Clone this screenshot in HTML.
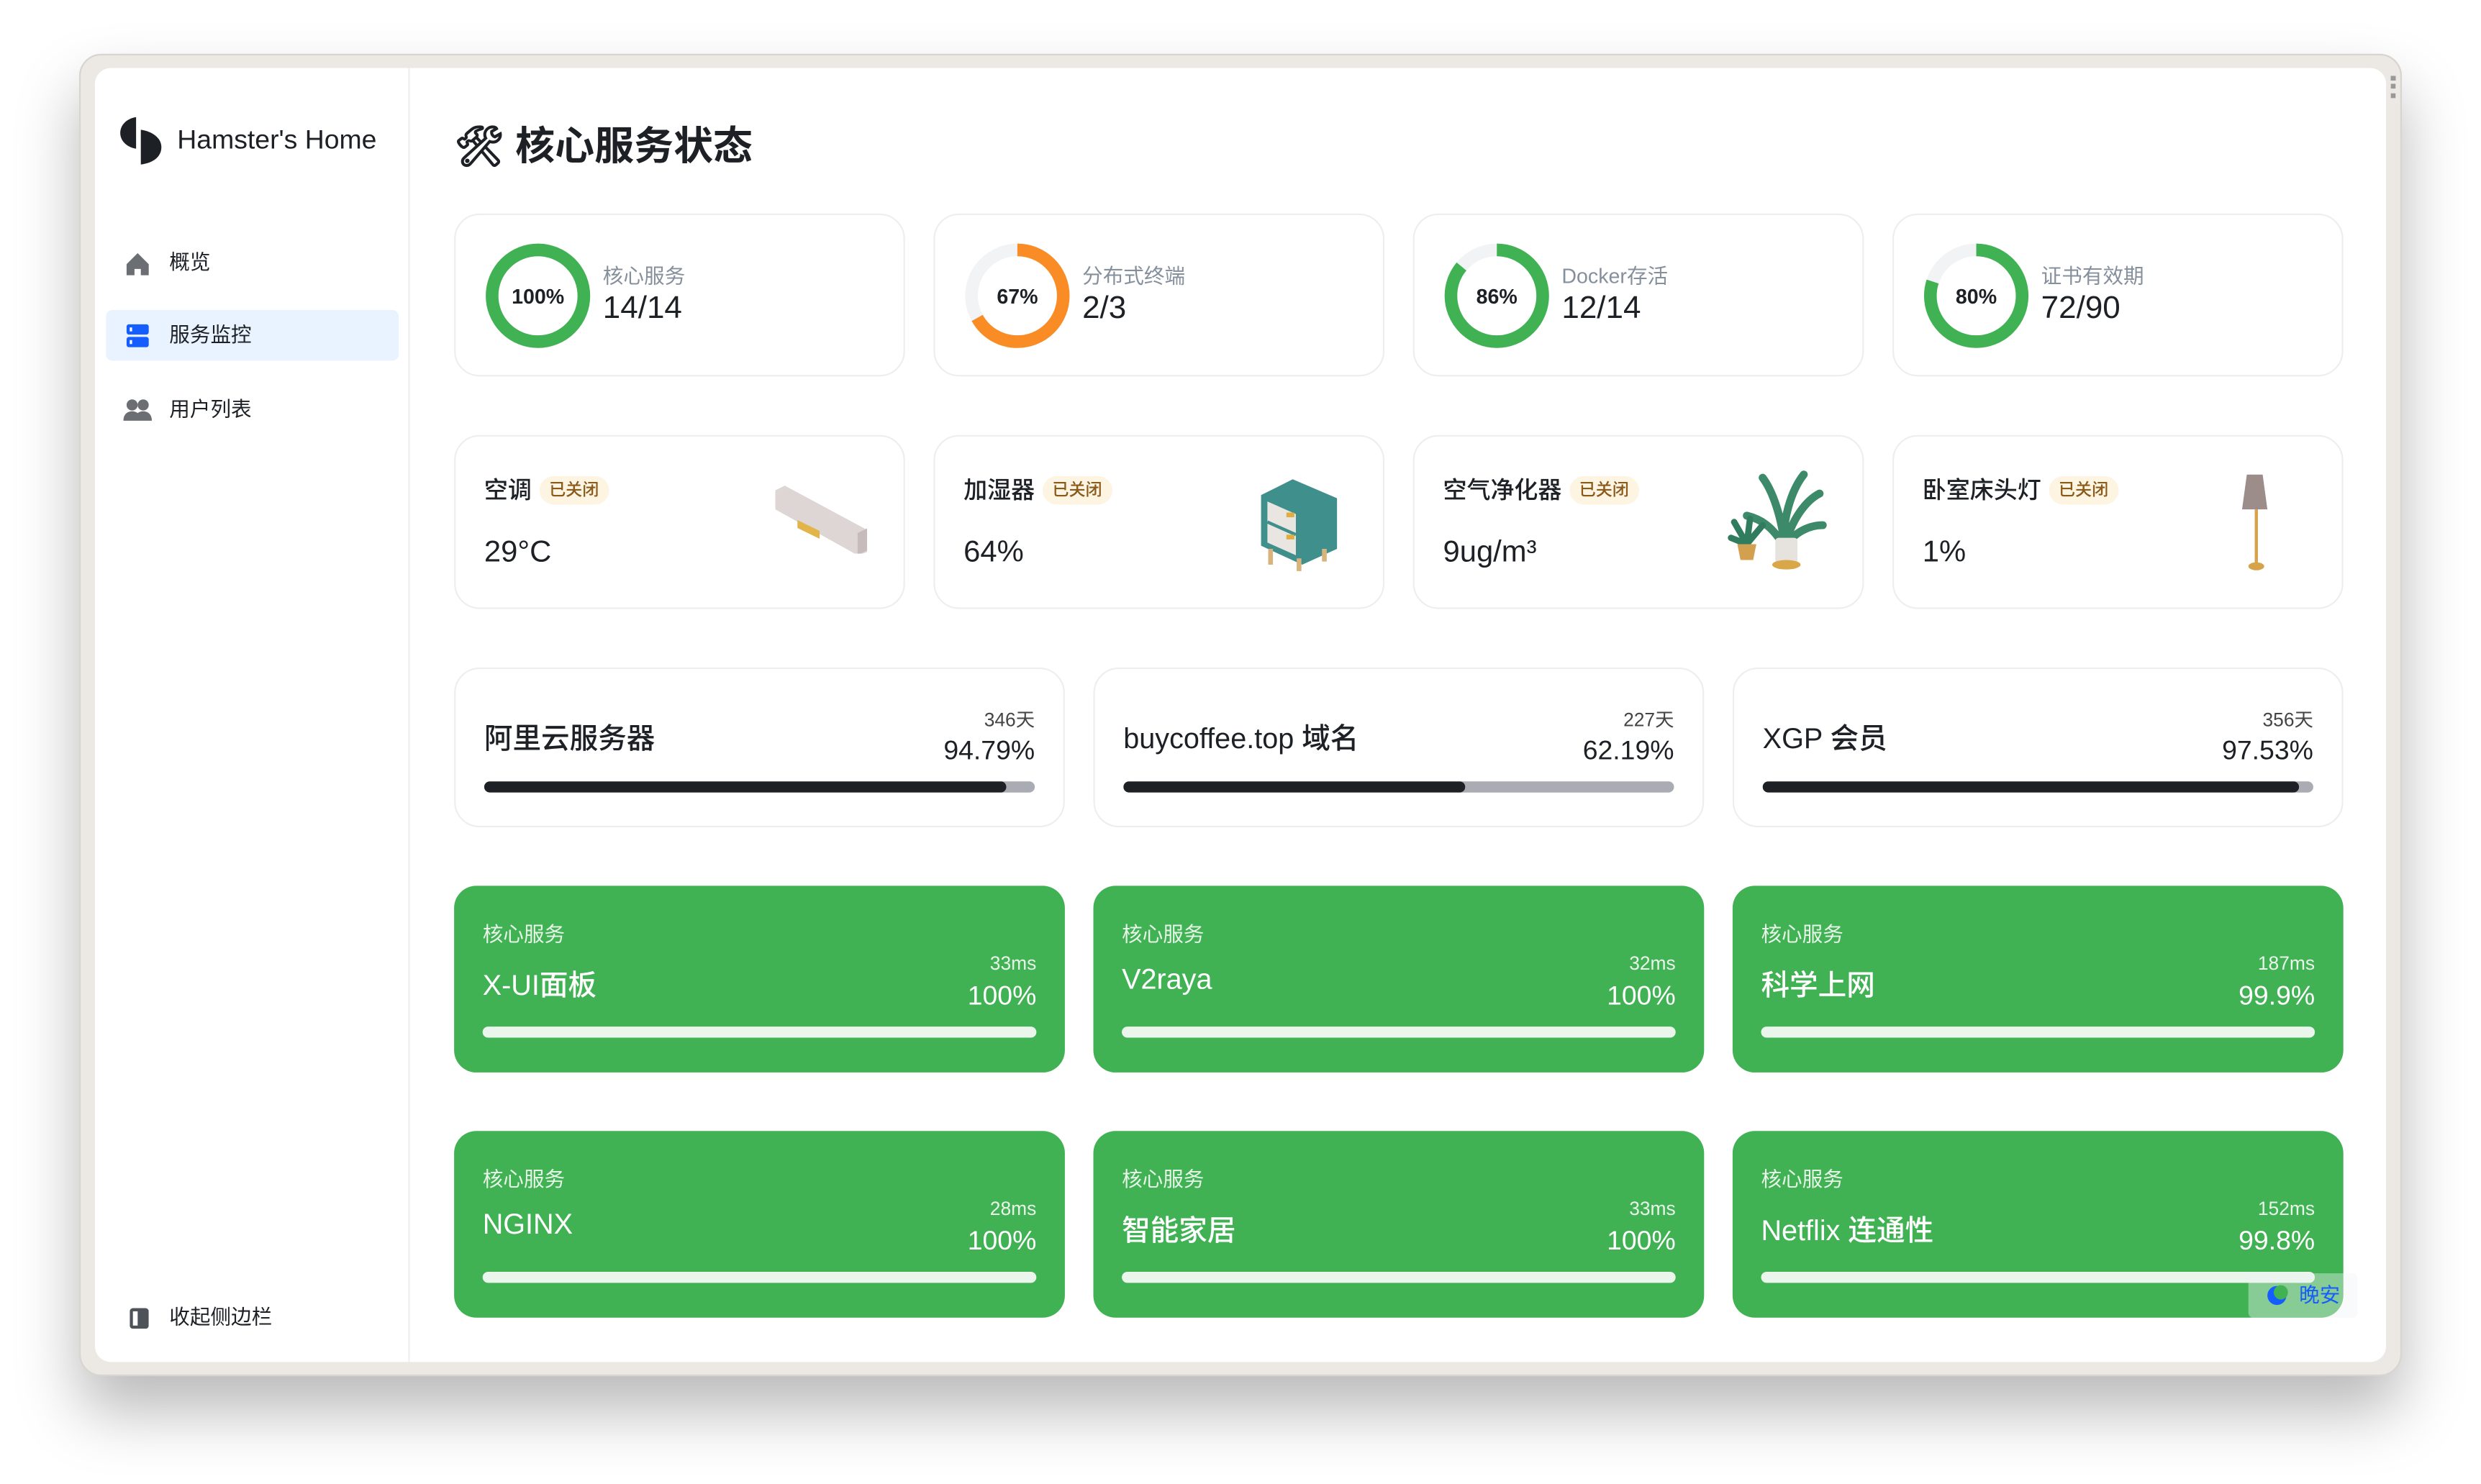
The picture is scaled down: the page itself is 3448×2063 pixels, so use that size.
<!DOCTYPE html>
<html><head><meta charset="utf-8"><style>
*{box-sizing:border-box;margin:0;padding:0}
html,body{width:3448px;height:2062px;overflow:hidden;background:#fff}
body{font-family:"Liberation Sans","Noto Sans CJK SC",sans-serif;color:#1d2025}
#s{position:absolute;left:0;top:0;width:1568px;height:938px;transform:scale(2.19898);transform-origin:0 0}
.a{position:absolute}
.frame{left:50px;top:34px;width:1468px;height:836px;background:#ece8e4;border-radius:14px;box-shadow:0 22px 40px rgba(0,0,0,.28);border:1px solid #d8d4d0}
.win{left:60px;top:43px;width:1448px;height:818px;background:#fff;border-radius:10px;overflow:hidden}
.side{left:0;top:0;width:199px;height:818px;border-right:1px solid #eee}
.nav{position:absolute;left:7px;width:185px;height:32px;border-radius:4px;font-size:13px;color:#1d2025;line-height:32px;padding-left:40px}
.card{position:absolute;background:#fff;border:1.5px solid #eee;border-radius:16px}
.lbl{font-size:13px;color:#86909c}
.val{font-size:20px;font-weight:500;color:#1d2025}
.badge{display:inline-block;background:#fdf4e2;color:#8a5a1a;font-size:10.5px;padding:0 6px;border-radius:9px;line-height:18px;vertical-align:2px;margin-left:5px}
.g{position:absolute;background:#41b254;border-radius:14px;color:#fff;width:386px;height:118px}
.g .t{position:absolute;left:18px;top:20px;font-size:13px;color:#e6f5e8}
.g .n{position:absolute;left:18px;top:49px;font-size:18px;font-weight:500}
.g .ms{position:absolute;right:18px;top:42px;font-size:12px;color:#e8f5ea}
.g .p{position:absolute;right:18px;top:60px;font-size:17px}
.g .b{position:absolute;left:18px;right:18px;top:89px;height:7px;border-radius:4px;background:#eaf6ec}
.w .n{position:absolute;left:18px;top:30px;font-size:18px;font-weight:500}
.w .d{position:absolute;right:18px;top:23px;font-size:12px;color:#444}
.w .p{position:absolute;right:18px;top:42px;font-size:17px}
.w .b{position:absolute;left:18px;right:18px;top:71px;height:7px;border-radius:4px;background:#a9adb3;overflow:hidden}
.w .b i{display:block;height:7px;background:#1d2025;border-radius:4px}
</style></head><body><div id="s">
<div class="a frame"></div>
<div class="a win">
 <div class="a side">
  <svg class="a" style="left:15px;top:31px" width="28" height="30" viewBox="0 0 28 30"><path d="M11 0v20C5 19 1 15 1 10S5 1 11 0z" fill="#1d2025"/><path d="M14 8c7 1 13 5 13 11s-5 10-13 11z" fill="#1d2025"/></svg>
  <div class="a" style="left:52px;top:36px;font-size:17px;font-weight:500">Hamster's Home</div>
  <div class="nav" style="top:107px"><svg class="a" style="left:12px;top:9px" width="16" height="16" viewBox="0 0 16 16"><path d="M8 1L1 8v7h5v-4h4v4h5V8z" fill="#6b6e73"/></svg>概览</div>
  <div class="nav" style="top:153px;background:#e8f3ff"><svg class="a" style="left:12px;top:9px" width="16" height="15" viewBox="0 0 16 15"><rect x="1" y="0" width="14" height="6.5" rx="1.5" fill="#165dff"/><rect x="1" y="8" width="14" height="6.5" rx="1.5" fill="#165dff"/><rect x="3" y="2" width="1.5" height="2.5" fill="#fff"/><rect x="3" y="10" width="1.5" height="2.5" fill="#fff"/></svg>服务监控</div>
  <div class="nav" style="top:200px"><svg class="a" style="left:11px;top:8px" width="18" height="16" viewBox="0 0 18 16"><circle cx="5.5" cy="5" r="3.5" fill="#6b6e73"/><circle cx="12.5" cy="5" r="3.5" fill="#6b6e73"/><path d="M0 15c0-4 2.5-6 5.5-6s5.5 2 5.5 6zM7 15c0-4 2.5-6 5.5-6S18 11 18 15z" fill="#6b6e73"/></svg>用户列表</div>
  <div class="nav" style="top:774px"><svg class="a" style="left:15px;top:10px" width="12" height="13" viewBox="0 0 12 13"><rect x="0" y="0" width="12" height="13" rx="2" fill="#4e5359"/><rect x="2" y="2" width="3" height="9" fill="#fff"/></svg>收起侧边栏</div>
 </div>
 <div class="a" style="left:227px;top:30px;font-size:25px;font-weight:700">🛠 核心服务状态</div>
</div>
<div class="a" style="left:1511px;top:48px;width:3px;height:14px;border-left:3px dotted #999"></div>

<div class="card" style="left:287px;top:135px;width:285px;height:103px">
 <svg class="a" style="left:18px;top:17px" width="68" height="68"><circle cx="34" cy="34" r="29" fill="none" stroke="#f2f3f5" stroke-width="8"/><circle cx="34" cy="34" r="29" fill="none" stroke="#41b254" stroke-width="8" stroke-dasharray="182.2 200" transform="rotate(-90 34 34)"/><text x="34" y="39" text-anchor="middle" font-size="13" font-weight="600" fill="#1d2025" font-family="Liberation Sans">100%</text></svg>
 <div class="a lbl" style="left:93px;top:28px">核心服务</div><div class="a val" style="left:93px;top:48px">14/14</div></div>
<div class="card" style="left:590px;top:135px;width:285px;height:103px">
 <svg class="a" style="left:18px;top:17px" width="68" height="68"><circle cx="34" cy="34" r="29" fill="none" stroke="#f2f3f5" stroke-width="8"/><circle cx="34" cy="34" r="29" fill="none" stroke="#fa8c25" stroke-width="8" stroke-dasharray="122 200" transform="rotate(-90 34 34)"/><text x="34" y="39" text-anchor="middle" font-size="13" font-weight="600" fill="#1d2025" font-family="Liberation Sans">67%</text></svg>
 <div class="a lbl" style="left:93px;top:28px">分布式终端</div><div class="a val" style="left:93px;top:48px">2/3</div></div>
<div class="card" style="left:893px;top:135px;width:285px;height:103px">
 <svg class="a" style="left:18px;top:17px" width="68" height="68"><circle cx="34" cy="34" r="29" fill="none" stroke="#f2f3f5" stroke-width="8"/><circle cx="34" cy="34" r="29" fill="none" stroke="#41b254" stroke-width="8" stroke-dasharray="156.7 200" transform="rotate(-90 34 34)"/><text x="34" y="39" text-anchor="middle" font-size="13" font-weight="600" fill="#1d2025" font-family="Liberation Sans">86%</text></svg>
 <div class="a lbl" style="left:93px;top:28px">Docker存活</div><div class="a val" style="left:93px;top:48px">12/14</div></div>
<div class="card" style="left:1196px;top:135px;width:285px;height:103px">
 <svg class="a" style="left:18px;top:17px" width="68" height="68"><circle cx="34" cy="34" r="29" fill="none" stroke="#f2f3f5" stroke-width="8"/><circle cx="34" cy="34" r="29" fill="none" stroke="#41b254" stroke-width="8" stroke-dasharray="145.8 200" transform="rotate(-90 34 34)"/><text x="34" y="39" text-anchor="middle" font-size="13" font-weight="600" fill="#1d2025" font-family="Liberation Sans">80%</text></svg>
 <div class="a lbl" style="left:93px;top:28px">证书有效期</div><div class="a val" style="left:93px;top:48px">72/90</div></div>

<div class="card" style="left:287px;top:275px;width:285px;height:110px">
 <div class="a" style="left:18px;top:23px;font-size:15px;font-weight:500">空调<span class="badge">已关闭</span></div>
 <div class="a" style="left:18px;top:63px;font-size:19px;font-weight:500">29°C</div>
 <svg class="a" style="left:198px;top:30px" width="64" height="44"><path d="M4 4l6-3 52 28v14l-6 2L4 16z" fill="#ddd6d4"/><path d="M56 31l6-3v14l-6 3z" fill="#c7bcbb"/><rect x="18" y="14" width="14" height="5" fill="#e3b44a" transform="skewY(26)"/></svg></div>
<div class="card" style="left:590px;top:275px;width:285px;height:110px">
 <div class="a" style="left:18px;top:23px;font-size:15px;font-weight:500">加湿器<span class="badge">已关闭</span></div>
 <div class="a" style="left:18px;top:63px;font-size:19px;font-weight:500">64%</div>
 <svg class="a" style="left:202px;top:25px" width="56" height="60"><path d="M4 12l20-10 28 12v32L30 56 4 44z" fill="#3f8f8c"/><path d="M8 16l18 8v26L8 42z" fill="#e9e6e2"/><path d="M8 29l18 8" stroke="#3f8f8c" stroke-width="2"/><rect x="20" y="23" width="5" height="3" fill="#e0ae40"/><rect x="20" y="37" width="5" height="3" fill="#e0ae40"/><path d="M10 46v10M28 52v10M44 46v8" stroke="#d8b37c" stroke-width="3"/></svg></div>
<div class="card" style="left:893px;top:275px;width:285px;height:110px">
 <div class="a" style="left:18px;top:23px;font-size:15px;font-weight:500">空气净化器<span class="badge">已关闭</span></div>
 <div class="a" style="left:18px;top:63px;font-size:19px;font-weight:500">9ug/m³</div>
 <svg class="a" style="left:196px;top:20px" width="66" height="66"><path d="M38 50C36 30 30 14 24 6M38 50c4-18 14-30 22-34M38 50C30 36 22 32 14 30M38 50c6-10 16-14 24-14M38 48c-2-14 4-34 12-44" stroke="#3d8a6a" stroke-width="5" fill="none" stroke-linecap="round"/><rect x="32" y="44" width="14" height="16" rx="2" fill="#e6e2de"/><ellipse cx="39" cy="61" rx="9" ry="3" fill="#d9a648"/><path d="M14 48L6 34M14 48l10-12M14 48L4 44M14 48l2-16" stroke="#2f7d5e" stroke-width="4" stroke-linecap="round"/><path d="M8 48h12l-2 10h-8z" fill="#d3a04f"/></svg></div>
<div class="card" style="left:1196px;top:275px;width:285px;height:110px">
 <div class="a" style="left:18px;top:23px;font-size:15px;font-weight:500">卧室床头灯<span class="badge">已关闭</span></div>
 <div class="a" style="left:18px;top:63px;font-size:19px;font-weight:500">1%</div>
 <svg class="a" style="left:216px;top:22px" width="26" height="64"><path d="M7 2h10l3 22h-16z" fill="#9c8d8a"/><rect x="12" y="24" width="2" height="36" fill="#d6a24a"/><ellipse cx="13" cy="60" rx="5" ry="2.5" fill="#d6a24a"/></svg></div>

<div class="card w" style="left:287px;top:422px;width:386px;height:101px"><div class="n">阿里云服务器</div><div class="d">346天</div><div class="p">94.79%</div><div class="b"><i style="width:94.79%"></i></div></div>
<div class="card w" style="left:691px;top:422px;width:386px;height:101px"><div class="n">buycoffee.top 域名</div><div class="d">227天</div><div class="p">62.19%</div><div class="b"><i style="width:62.19%"></i></div></div>
<div class="card w" style="left:1095px;top:422px;width:386px;height:101px"><div class="n">XGP 会员</div><div class="d">356天</div><div class="p">97.53%</div><div class="b"><i style="width:97.53%"></i></div></div>

<div class="g" style="left:287px;top:560px"><div class="t">核心服务</div><div class="n">X-UI面板</div><div class="ms">33ms</div><div class="p">100%</div><div class="b"></div></div>
<div class="g" style="left:691px;top:560px"><div class="t">核心服务</div><div class="n">V2raya</div><div class="ms">32ms</div><div class="p">100%</div><div class="b"></div></div>
<div class="g" style="left:1095px;top:560px"><div class="t">核心服务</div><div class="n">科学上网</div><div class="ms">187ms</div><div class="p">99.9%</div><div class="b"></div></div>
<div class="g" style="left:287px;top:715px"><div class="t">核心服务</div><div class="n">NGINX</div><div class="ms">28ms</div><div class="p">100%</div><div class="b"></div></div>
<div class="g" style="left:691px;top:715px"><div class="t">核心服务</div><div class="n">智能家居</div><div class="ms">33ms</div><div class="p">100%</div><div class="b"></div></div>
<div class="g" style="left:1095px;top:715px"><div class="t">核心服务</div><div class="n">Netflix 连通性</div><div class="ms">152ms</div><div class="p">99.8%</div><div class="b"></div></div>

<div class="a" style="left:1421px;top:805px;width:69px;height:28px;background:rgba(240,243,245,.4);border-radius:3px;font-size:13px;color:#165dff;line-height:28px;padding-left:32px">晚安
 <svg class="a" style="left:11px;top:7px" width="14" height="14" viewBox="0 0 14 14"><circle cx="7" cy="7" r="6" fill="#165dff"/><circle cx="9.5" cy="5" r="4.5" fill="#41b254"/></svg></div>
</div></body></html>
